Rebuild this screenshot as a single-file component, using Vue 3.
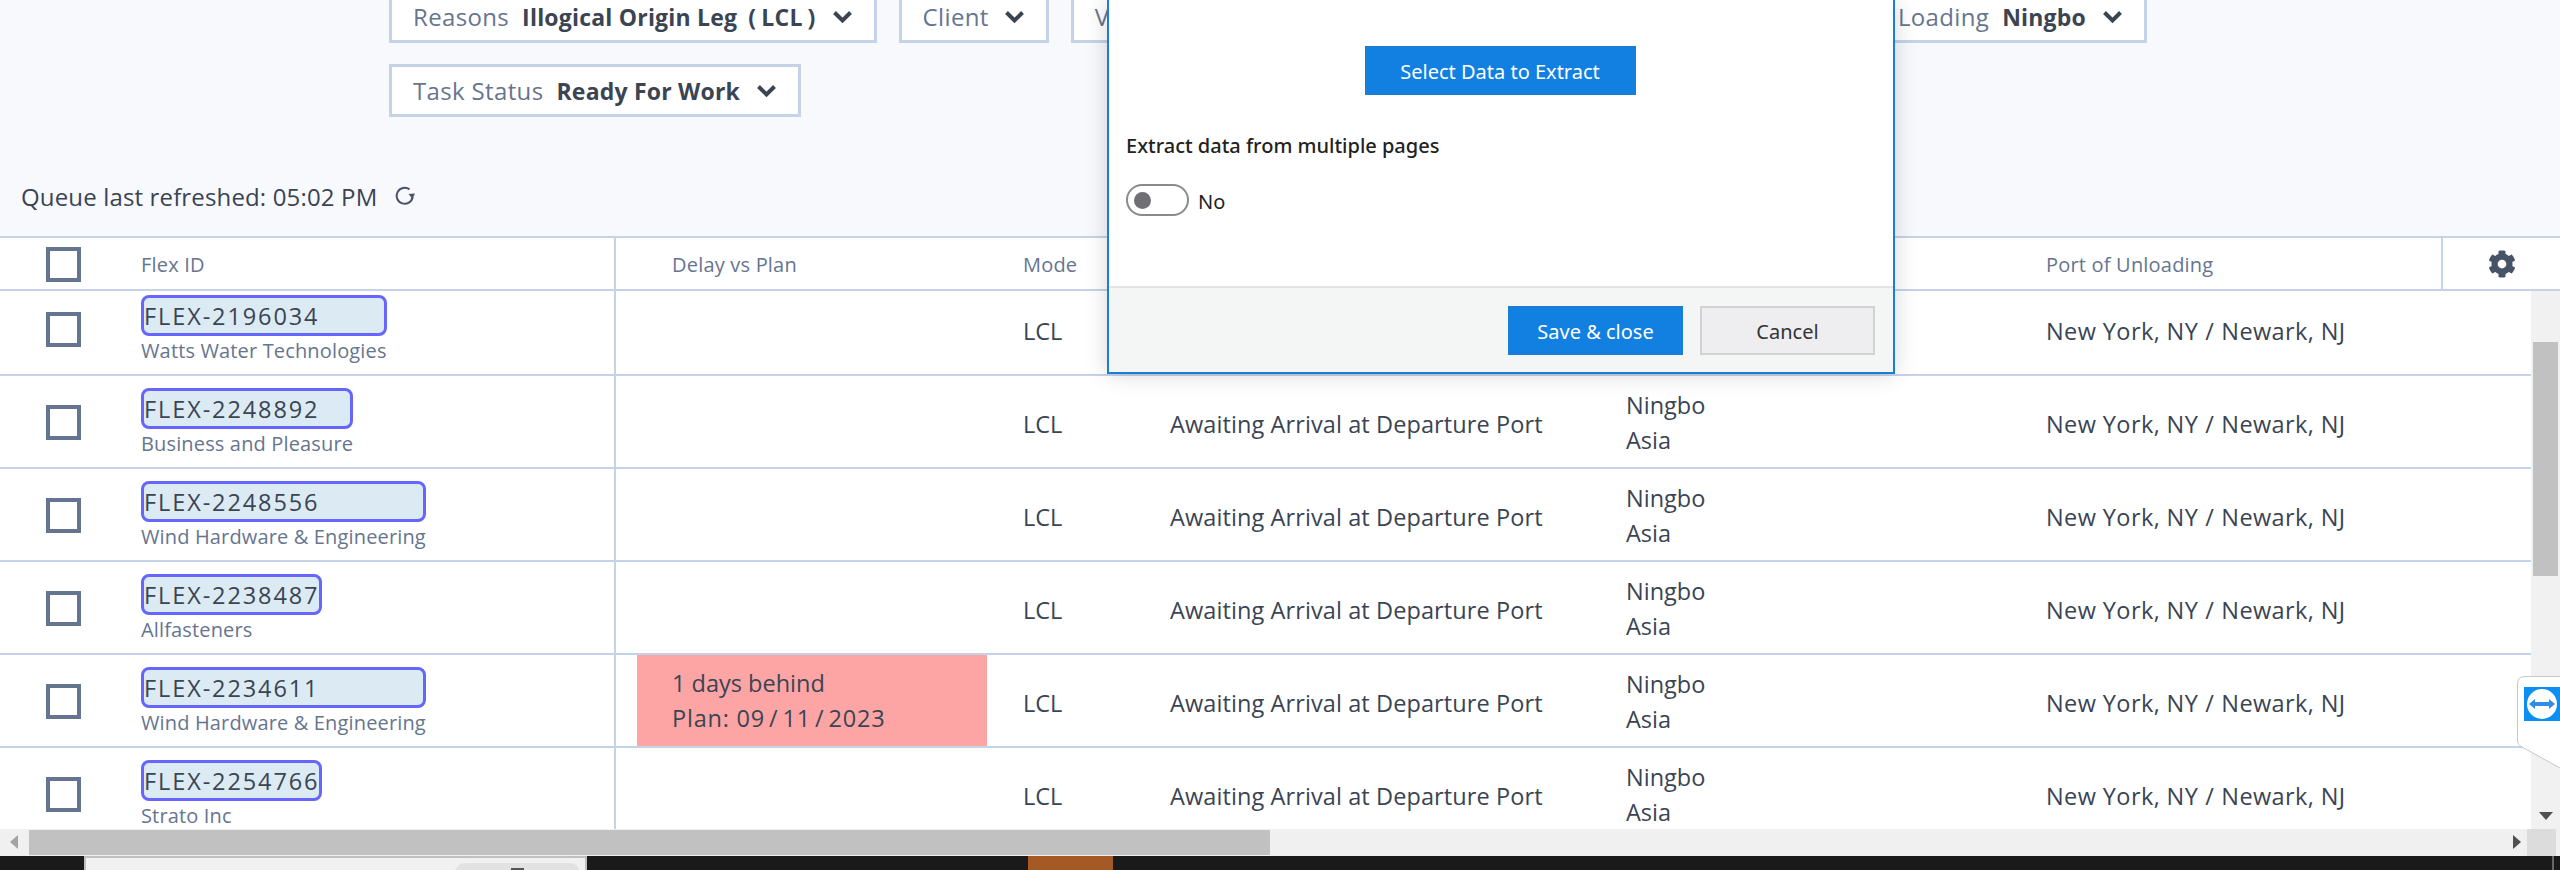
<template>
  <div class="page">
    <div class="filters">
      <div class="filter-row">
        <div class="chip"><span class="chip-label">Reasons</span><b>Illogical Origin Leg <span class="paren">(</span>LCL<span class="paren">)</span></b><svg class="chev" viewBox="0 0 20 14"><path d="M2 2.5 L10 10.5 L18 2.5" /></svg></div>
        <div class="chip"><span class="chip-label">Client</span><svg class="chev" viewBox="0 0 20 14"><path d="M2 2.5 L10 10.5 L18 2.5" /></svg></div>
        <div class="chip chip-fill"><span class="chip-label">Vendor</span></div>
        <div class="chip"><span class="chip-label">Port of Loading</span><b>Ningbo</b><svg class="chev" viewBox="0 0 20 14"><path d="M2 2.5 L10 10.5 L18 2.5" /></svg></div>
      </div>
      <div class="filter-row">
        <div class="chip"><span class="chip-label">Task Status</span><b>Ready For Work</b><svg class="chev" viewBox="0 0 20 14"><path d="M2 2.5 L10 10.5 L18 2.5" /></svg></div>
      </div>
    </div>

    <div class="refresh">
      <span>Queue last refreshed: 05:02 PM</span>
      <svg class="refresh-icon" viewBox="0 0 20 20"><path d="M14.5 3.4 A8 8 0 1 0 17.6 11" /><path class="fill" d="M13.6 8 L20 7.6 L17.4 13 Z" /></svg>
    </div>

    <div class="table">
      <div class="row head">
        <div class="cell check"><span class="box"></span></div>
        <div class="cell flex">Flex ID</div>
        <div class="cell delay">Delay vs Plan</div>
        <div class="cell mode">Mode</div>
        <div class="cell status"></div>
        <div class="cell region"></div>
        <div class="cell port">Port of Unloading</div>
        <div class="cell gear">
          <svg viewBox="0 0 512 512"><path d="M487.4 315.7l-42.6-24.6c4.3-23.2 4.3-47 0-70.2l42.6-24.6c4.9-2.8 7.1-8.6 5.5-14-11.1-35.6-30-67.8-54.7-94.6-3.8-4.1-10-5.1-14.8-2.3L380.8 110c-17.9-15.4-38.5-27.3-60.8-35.1V25.8c0-5.6-3.9-10.5-9.4-11.7-36.7-8.2-74.3-7.8-109.2 0-5.5 1.2-9.4 6.1-9.4 11.7V75c-22.2 7.9-42.8 19.8-60.8 35.1L88.7 85.5c-4.9-2.8-11-1.9-14.8 2.3-24.7 26.7-43.6 58.9-54.7 94.6-1.7 5.4.6 11.2 5.5 14L67.3 221c-4.3 23.2-4.3 47 0 70.2l-42.6 24.6c-4.9 2.8-7.1 8.6-5.5 14 11.1 35.6 30 67.8 54.7 94.6 3.8 4.1 10 5.1 14.8 2.3l42.6-24.6c17.9 15.4 38.5 27.3 60.8 35.1v49.2c0 5.6 3.9 10.5 9.4 11.7 36.7 8.2 74.3 7.8 109.2 0 5.5-1.2 9.4-6.1 9.4-11.7v-49.2c22.2-7.9 42.8-19.8 60.8-35.1l42.6 24.6c4.9 2.8 11 1.9 14.8-2.3 24.7-26.7 43.6-58.9 54.7-94.6 1.5-5.5-.7-11.3-5.6-14.1zM256 336c-44.1 0-80-35.9-80-80s35.9-80 80-80 80 35.9 80 80-35.9 80-80 80z" /></svg>
        </div>
      </div>

      <div class="body-wrap">
        <div class="body">
          <div class="rows">
            <div v-for="r in rows" :key="r.id" class="row">
              <div class="cell check"><span class="box"></span></div>
              <div class="cell flex">
                <div class="id-block">
                  <div class="badge">{{ r.id }}</div>
                  <div class="client">{{ r.client }}</div>
                </div>
              </div>
              <div class="cell delay">
                <div v-if="r.late" class="late">
                  <div>1 days behind</div>
                  <div class="plan">Plan: 09<span class="slash">/</span>11<span class="slash">/</span>2023</div>
                </div>
              </div>
              <div class="cell mode">LCL</div>
              <div class="cell status">Awaiting Arrival at Departure Port</div>
              <div class="cell region"><div>Ningbo</div><div>Asia</div></div>
              <div class="cell port">New York, NY <span class="slash">/</span> Newark, NJ</div>
            </div>
          </div>
        </div>
        <div class="vscroll">
          <div class="vthumb"></div>
          <svg class="vdown" viewBox="0 0 14 8"><path d="M0 0 H14 L7 8 Z" /></svg>
        </div>
      </div>

      <div class="hscroll">
        <svg class="harrow" viewBox="0 0 8 14"><path d="M8 0 V14 L0 7 Z" /></svg>
        <div class="hthumb"></div>
        <svg class="harrow right" viewBox="0 0 8 14"><path d="M0 0 V14 L8 7 Z" /></svg>
        <div class="corner"></div>
      </div>
    </div>

    <div class="taskbar">
      <div class="task-window"><div class="task-tab"><span class="task-glyph"></span></div></div>
      <div class="task-orange"></div>
      <div class="task-time">5:14 PM</div>
      <div class="task-edge"></div>
    </div>

    <div class="modal">
      <div class="modal-body">
        <div class="center"><button class="btn primary wide">Select Data to Extract</button></div>
        <div class="extract-label">Extract data from multiple pages</div>
        <div class="toggle-row">
          <span class="toggle"><span class="knob"></span></span>
          <span class="toggle-text">No</span>
        </div>
      </div>
      <div class="modal-foot">
        <button class="btn primary">Save &amp; close</button>
        <button class="btn">Cancel</button>
      </div>
    </div>

    <svg class="tv-tab" viewBox="0 0 43 92">
      <path class="tv-shape" d="M43 0.5 H8 Q0.5 0.5 0.5 8 V64 Q0.5 69 5 71 L43 92" />
      <rect x="7" y="11" width="36" height="34" fill="#0b8ff2" />
      <circle cx="25" cy="28" r="15" fill="#fff" />
      <path d="M12 28 L18 23 V26 H32 V23 L38 28 L32 33 V30 H18 V33 Z" fill="#2f8eea" />
    </svg>
  </div>
</template>

<script setup>
const rows = [
  { id: 'FLEX-2196034', client: 'Watts Water Technologies' },
  { id: 'FLEX-2248892', client: 'Business and Pleasure' },
  { id: 'FLEX-2248556', client: 'Wind Hardware & Engineering' },
  { id: 'FLEX-2238487', client: 'Allfasteners' },
  { id: 'FLEX-2234611', client: 'Wind Hardware & Engineering', late: true },
  { id: 'FLEX-2254766', client: 'Strato Inc' },
];
</script>

<style>
  html, body {
    margin: 0;
    overflow: hidden;
  }
</style>

<style scoped>
  .page {
    position: relative;
    width: 2560px;
    height: 870px;
    overflow: hidden;
    display: flex;
    flex-direction: column;
    background: #f7f9fd;
    color: #3a4453;
    font-family: "Open Sans", "Liberation Sans", sans-serif;
    font-size: 23.5px;
  }
  .filters {
    display: flex;
    flex-direction: column;
    gap: 21px;
    width: 1758px;
    margin: -10px 0 0 389px;
  }
  .filter-row {
    display: flex;
    gap: 22px;
  }
  .chip {
    box-sizing: border-box;
    height: 53px;
    display: flex;
    align-items: center;
    padding: 0 21px;
    background: #fff;
    border: 3px solid #c5d3e8;
    white-space: nowrap;
    font-size: 24px;
    letter-spacing: 0.35px;
  }
  .chip-fill {
    flex: 1;
  }
  .chip-label {
    color: #66758f;
    margin-right: 13px;
  }
  .chip b {
    font-weight: 700;
    font-size: 23px;
    letter-spacing: 0.2px;
    margin-right: 16px;
  }
  .paren {
    margin: 0 5px;
  }
  .paren:last-child {
    margin-right: 0;
  }
  .chev {
    width: 21px;
    height: 14px;
    fill: none;
    stroke: #3a4453;
    stroke-width: 4;
  }
  .chip-label + .chev {
    margin-left: 2px;
  }
  .refresh {
    height: 119px;
    box-sizing: border-box;
    padding: 39px 0 0 21px;
    display: flex;
    align-items: center;
    gap: 18px;
    font-size: 24px;
    letter-spacing: 0.15px;
  }
  .refresh-icon {
    width: 20px;
    height: 20px;
    fill: none;
    stroke: #47536a;
    stroke-width: 2;
  }
  .refresh-icon .fill {
    fill: #47536a;
    stroke: none;
  }
  .table {
    flex: 1;
    min-height: 0;
    display: flex;
    flex-direction: column;
    background: #fff;
    border-top: 2px solid #c5d3e8;
  }
  .row {
    display: grid;
    grid-template-columns: 141px 475px 407px 147px 456px 420px 395px;
    height: 93px;
    box-sizing: border-box;
    border-bottom: 2px solid #c5d3e8;
    align-items: center;
  }
  .head {
    grid-template-columns: 141px 475px 407px 147px 456px 420px 395px 1fr;
    height: 54px;
    color: #66758f;
    font-size: 20px;
    letter-spacing: 0.2px;
  }
  .cell {
    height: 100%;
    display: flex;
    align-items: center;
    box-sizing: border-box;
    min-width: 0;
    white-space: nowrap;
  }
  .check {
    padding-left: 46px;
  }
  .box {
    display: block;
    box-sizing: border-box;
    width: 35px;
    height: 35px;
    border: 4px solid #66758f;
  }
  .flex {
    border-right: 2px solid #c5d3e8;
  }
  .delay {
    padding-left: 56px;
  }
  .row:not(.head) .delay {
    padding-left: 21px;
    padding-right: 36px;
  }
  .row:not(.head) .check {
    padding-top: 2px;
  }
  .row:not(.head) .flex {
    padding-top: 4px;
  }
  .row:not(.head) .mode,
  .row:not(.head) .status,
  .row:not(.head) .port {
    padding-top: 5px;
  }
  .row:not(.head) .region {
    padding-top: 3px;
  }
  .row:not(.head) .status {
    letter-spacing: 0.1px;
  }
  .row:not(.head) .port {
    letter-spacing: 0.4px;
  }
  .head .cell {
    padding-top: 2px;
  }
  .late {
    width: 100%;
    height: 100%;
    box-sizing: border-box;
    padding: 2px 0 0 35px;
    background: #fda4a4;
    line-height: 35px;
    display: flex;
    flex-direction: column;
    justify-content: center;
  }
  .plan {
    letter-spacing: 0.8px;
  }
  .slash {
    margin: 0 4px;
  }
  .port .slash {
    margin: 0 7px;
  }
  .region {
    flex-direction: column;
    align-items: flex-start;
    justify-content: center;
    line-height: 35px;
  }
  .gear {
    justify-content: center;
    border-left: 2px solid #c5d3e8;
  }
  .gear svg {
    width: 28px;
    height: 28px;
    fill: #475467;
  }
  .id-block {
    display: inline-flex;
    flex-direction: column;
  }
  .badge {
    box-sizing: border-box;
    height: 41px;
    padding: 2px 0 0;
    display: flex;
    align-items: center;
    background: #dcebf3;
    border: 3px solid #6666ff;
    border-radius: 8px;
    letter-spacing: 1.9px;
  }
  .client {
    font-size: 20px;
    line-height: 30px;
    color: #66758f;
    letter-spacing: 0.15px;
  }
  .body-wrap {
    height: 538px;
    display: flex;
  }
  .body {
    width: 2531px;
    overflow: hidden;
  }
  .rows {
    margin-top: -8px;
  }
  .vscroll {
    position: relative;
    flex: 1;
    background: #f1f1f1;
  }
  .vthumb {
    margin: 51px 2px 0;
    height: 234px;
    background: #c1c1c1;
  }
  .vdown {
    position: absolute;
    left: 8px;
    bottom: 9px;
    width: 14px;
    height: 8px;
    fill: #505050;
  }
  .hscroll {
    height: 28px;
    display: flex;
    align-items: center;
    background: #f0f0f0;
  }
  .harrow {
    width: 8px;
    height: 14px;
    margin-left: 10px;
    fill: #a3a3a3;
  }
  .harrow.right {
    margin-left: 1243px;
    fill: #505050;
  }
  .hthumb {
    width: 1241px;
    height: 25px;
    margin-left: 11px;
    background: #c1c1c1;
  }
  .corner {
    width: 29px;
    height: 100%;
    margin-left: 6px;
    background: #dcdcdc;
  }
  .taskbar {
    position: relative;
    height: 14px;
    display: flex;
    background: #1a1a1a;
    overflow: hidden;
  }
  .task-window {
    box-sizing: border-box;
    width: 503px;
    margin-left: 84px;
    background: #f1f1f1;
    border: 2px solid #c0c0c0;
    border-bottom: 0;
  }
  .task-tab {
    position: relative;
    width: 125px;
    height: 20px;
    margin: 5px 0 0 369px;
    background: #e2e2e2;
    border-radius: 10px 10px 0 0;
  }
  .task-glyph {
    position: absolute;
    left: 56px;
    top: 5px;
    width: 13px;
    height: 4px;
    background: #555;
  }
  .task-orange {
    width: 85px;
    margin-left: 441px;
    background: #a55a26;
  }
  .task-time {
    margin-left: 1260px;
    color: #fff;
    font-size: 18px;
    line-height: 24px;
    padding-top: 10px;
  }
  .task-edge {
    position: absolute;
    left: 2552px;
    top: 0;
    width: 2px;
    height: 14px;
    background: #666;
  }
  .modal {
    position: absolute;
    left: 1107px;
    top: 0;
    box-sizing: border-box;
    width: 788px;
    height: 374px;
    display: flex;
    flex-direction: column;
    background: #fff;
    border: 2px solid #1a7ed6;
    border-top: 0;
    box-shadow: 0 0 22px rgba(0, 0, 0, 0.16);
    color: #222;
    font-family: "Noto Sans", "Open Sans", sans-serif;
    font-size: 20px;
  }
  .modal-body {
    flex: 1;
    padding: 46px 17px 0;
  }
  .center {
    display: flex;
    justify-content: center;
    margin-right: 2px;
  }
  .btn {
    box-sizing: border-box;
    width: 175px;
    height: 49px;
    background: #eeeef0;
    border: 2px solid #d2d2d2;
    color: #333;
    font: inherit;
    padding: 2px 0 0;
  }
  .btn.primary {
    background: #1180e0;
    border-color: #1a7ed6;
    color: #fff;
  }
  .btn.wide {
    width: 271px;
  }
  .extract-label {
    margin-top: 36px;
    line-height: 30px;
    font-weight: 500;
  }
  .toggle-row {
    display: flex;
    align-items: center;
    gap: 9px;
    margin-top: 23px;
  }
  .toggle-text {
    padding-top: 2px;
  }
  .toggle {
    box-sizing: border-box;
    display: flex;
    align-items: center;
    width: 63px;
    height: 32px;
    padding-left: 6px;
    border: 2px solid #8a8a8a;
    border-radius: 16px;
  }
  .knob {
    width: 17px;
    height: 17px;
    background: #6f6f74;
    border-radius: 50%;
  }
  .modal-foot {
    box-sizing: border-box;
    height: 86px;
    display: flex;
    justify-content: flex-end;
    gap: 17px;
    padding: 18px 18px 0 0;
    background: #f4f5f5;
    border-top: 2px solid #e4e4e4;
  }
  .tv-tab {
    position: absolute;
    left: 2517px;
    top: 676px;
    width: 43px;
    height: 92px;
  }
  .tv-shape {
    fill: #fff;
    stroke: #c4c8ce;
    stroke-width: 1;
  }
</style>
